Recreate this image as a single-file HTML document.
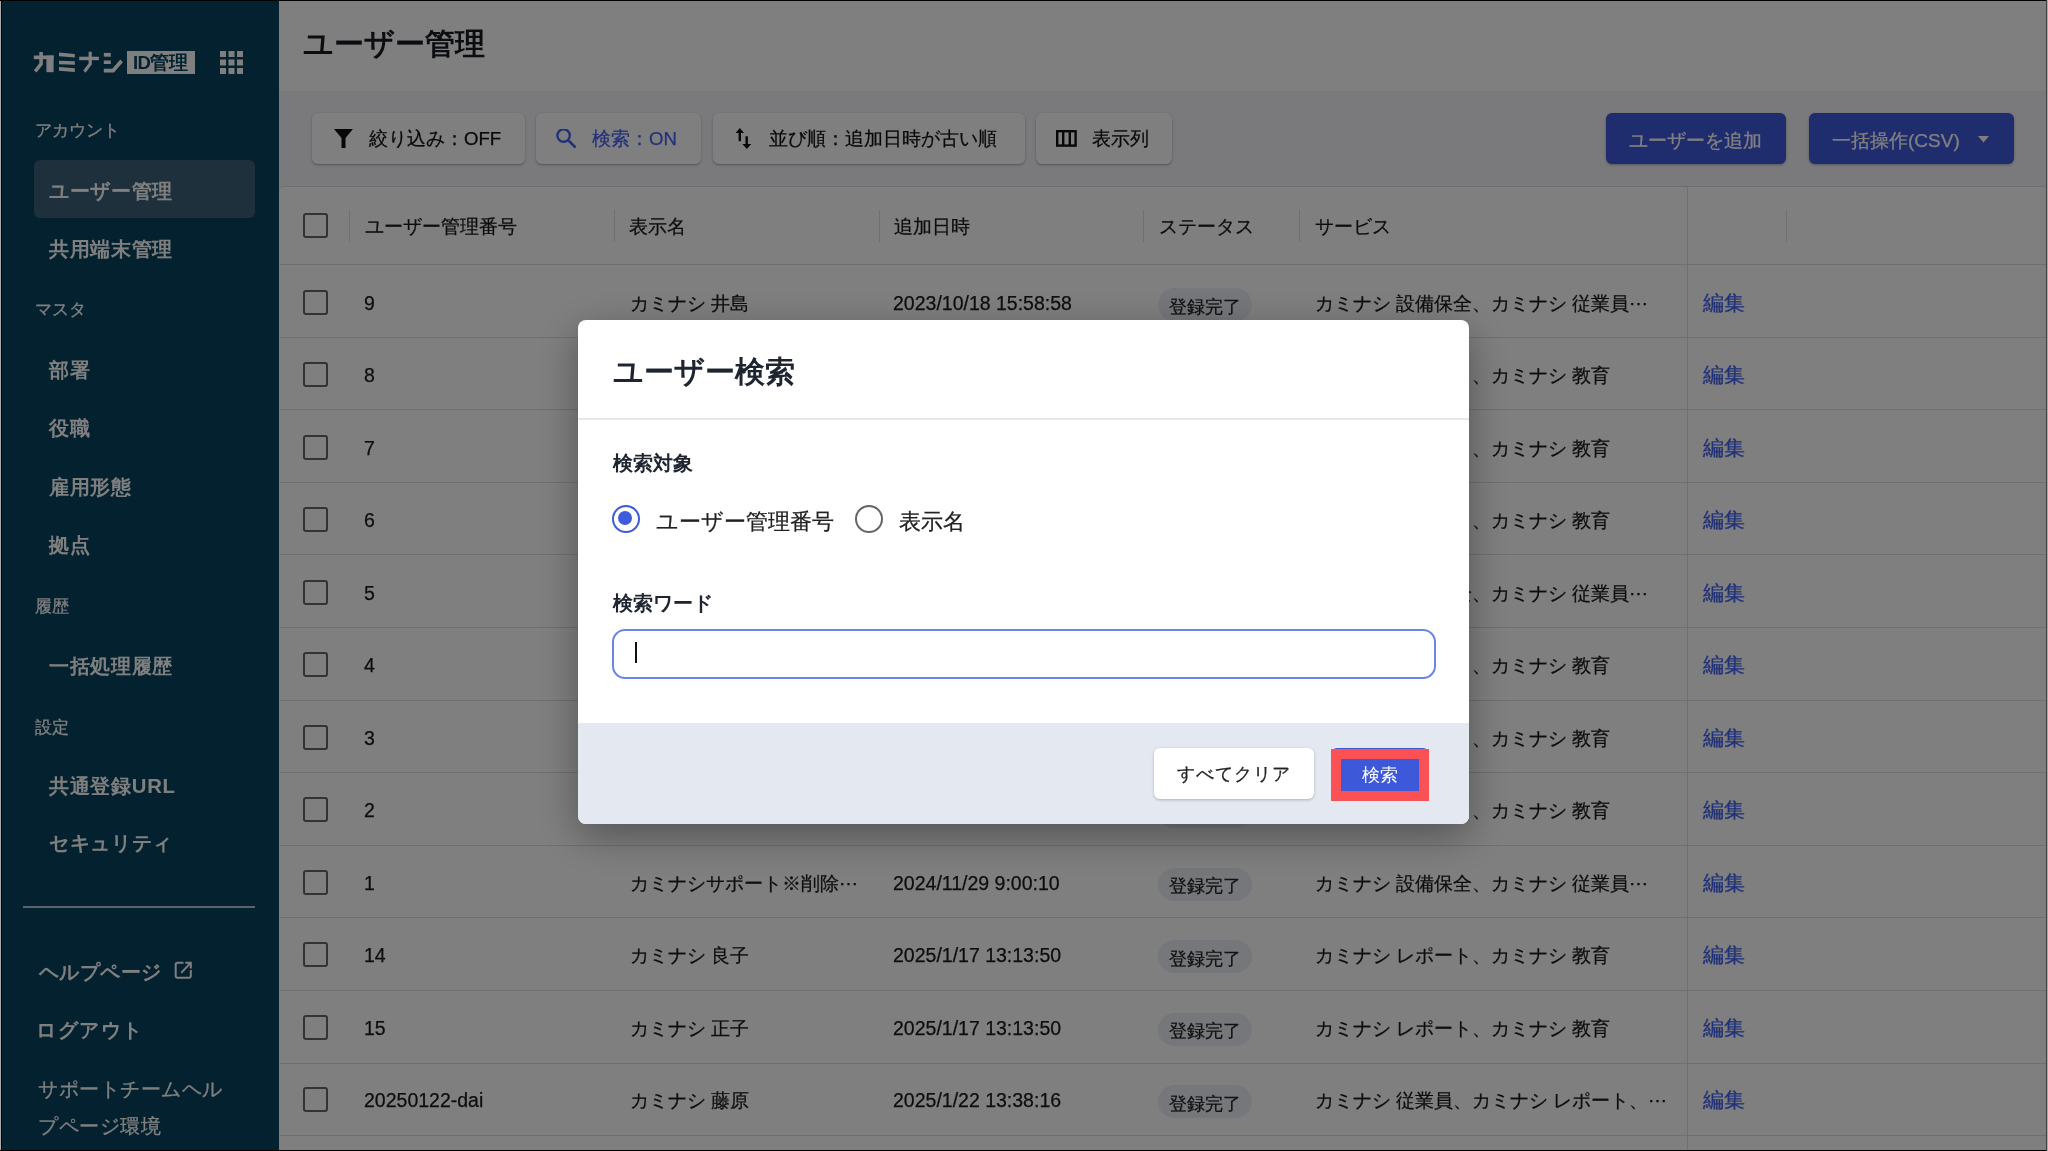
<!DOCTYPE html>
<html lang="ja"><head><meta charset="utf-8"><title>ユーザー管理</title>
<style>
*{box-sizing:border-box;margin:0;padding:0}
html,body{width:2048px;height:1151px;overflow:hidden;background:#fff}
body{position:relative;font-family:"Liberation Sans",sans-serif;color:#1a1a1a;-webkit-font-smoothing:antialiased}
.abs{position:absolute}
.row .c,.hdr,.tb .tx,.pb .tx,#modal .rlab,#modal .clr,.row .chip,#side .sec,#side .sup{-webkit-text-stroke:0.25px currentColor}
#root{position:absolute;left:0;top:0;width:2048px;height:1151px;will-change:transform}
/* sidebar */
#side{position:absolute;left:1px;top:0;width:278px;height:1151px;background:#08425e}
#side .sec{position:absolute;left:34px;font-size:16.5px;color:#fff;line-height:1}
#side .it{position:absolute;left:48px;font-size:20.3px;letter-spacing:0.7px;font-weight:bold;color:#fff;line-height:1}
#side .it2{position:absolute;left:38px;font-size:20.3px;letter-spacing:0.4px;font-weight:bold;color:#fff;line-height:1}
#side .active{position:absolute;left:33px;top:160px;width:221px;height:58px;border-radius:6px;background:#3c6078}
#side .hr{position:absolute;left:22px;top:906px;width:232px;height:2px;background:rgba(255,255,255,0.7)}
#side .sup{position:absolute;left:37px;top:1071px;font-size:20px;color:#fff;line-height:36.5px;width:200px;letter-spacing:0.5px}
/* main */
#head{position:absolute;left:279px;top:0;width:1769px;height:91px;background:#fff}
#title{position:absolute;left:303px;top:25.5px;font-size:29.8px;font-weight:bold;color:#161b22;line-height:1.2}
#tool{position:absolute;left:279px;top:91px;width:1769px;height:97px;background:#f4f5fa}
.tb{position:absolute;top:113px;height:51px;background:#fff;border-radius:6px;box-shadow:0 1px 3px rgba(0,0,0,0.25),0 1px 1px rgba(0,0,0,0.1);font-size:18.6px;color:#111;line-height:1}
.tb .ic{position:absolute}
.tb .tx{position:absolute;top:17px;white-space:nowrap}
.pb{position:absolute;top:113px;height:51px;background:#3e58dc;border-radius:6px;box-shadow:0 1px 3px rgba(0,0,0,0.3);font-size:19px;color:#fff;line-height:1}
.pb .tx{position:absolute;top:17.5px;white-space:nowrap}
#table{position:absolute;left:279px;top:186px;width:1769px;height:970px;background:#fff;border-top-left-radius:5px;border-top-right-radius:5px;border-top:1px solid #dcdde2}
.hdr{position:absolute;top:218px;font-size:18.8px;color:#1a1a1a;line-height:1}
.vd{position:absolute;top:210px;width:1px;height:32px;background:#e0e0e0}
.hline{position:absolute;left:280px;width:1766px;height:1px;background:#e0e0e0}
.cb{position:absolute;left:303px;width:25px;height:25px;border:2.6px solid #666;border-radius:3px}
.row{position:absolute;left:0;width:2048px;height:72px}
.row .cb{top:25px}
.row .c{position:absolute;top:30px;font-size:18.8px;line-height:1;white-space:nowrap;color:#1a1a1a}
.row .num{left:364px;font-size:19.5px!important;top:29px!important}
.row .name{left:630px}
.row .date{left:893px;font-size:19.5px!important;top:29px!important}
.row .svc{left:1315px}
.row .edit{left:1703px;color:#4262f0;font-size:20.8px!important;top:28px!important}
.row .chip{position:absolute;left:1158px;top:23px;width:94px;height:33px;border-radius:16.5px;background:#eceef4;font-size:18px;line-height:1;padding-top:9.5px;padding-left:11px;color:#222}
#vcol{position:absolute;left:1687px;top:187px;width:1px;height:970px;background:#e0e0e0}
/* overlay */
#ov{position:absolute;left:0;top:0;width:2048px;height:1151px;background:rgba(0,0,0,0.5)}
/* modal */
#modal{position:absolute;left:578px;top:320px;width:891px;height:504px;background:#fff;border-radius:8px;box-shadow:0 12px 40px rgba(0,0,0,0.35);overflow:hidden}
#modal .mt{position:absolute;left:35px;top:33.5px;font-size:29.8px;font-weight:bold;color:#1e2530;line-height:1.2}
#modal .mhr{position:absolute;left:0;top:98px;width:891px;height:2px;background:#e6e8ee}
#modal .lbl{position:absolute;left:35px;font-size:19.8px;font-weight:bold;color:#1e2530;line-height:1}
#modal .rlab{position:absolute;top:191px;font-size:22px;color:#222;line-height:1}
#modal .radio{position:absolute;top:185px;width:28px;height:28px;border-radius:50%;border:2.6px solid #666}
#modal .radio.on{border-color:#3e5bdb}
#modal .radio.on:after{content:"";position:absolute;left:4.4px;top:4.4px;width:14px;height:14px;border-radius:50%;background:#3e5bdb}
#modal .inp{position:absolute;left:34px;top:309px;width:824px;height:50px;border:2px solid #6a84e8;border-radius:13px}
#modal .caret{position:absolute;left:57px;top:322px;width:2px;height:21px;background:#111}
#modal .foot{position:absolute;left:0;top:403px;width:891px;height:101px;background:#e4e8f1}
#modal .clr{position:absolute;left:576px;top:428px;width:160px;height:51px;background:#fff;border-radius:6px;box-shadow:0 1px 3px rgba(0,0,0,0.25);font-size:18.4px;color:#222;line-height:1;padding-top:17px;text-align:center;letter-spacing:0.9px}
#modal .sbtn{position:absolute;left:753px;top:428px;width:98px;height:51px;background:#3d58d8;border-radius:6px}
#modal .srch{position:absolute;left:753px;top:429px;width:98px;height:52px;background:#fa5254}
#modal .srch .in{position:absolute;left:10px;top:10px;width:78px;height:32px;background:#3d58d8;color:#fff;font-size:18.3px;line-height:1;padding-top:7.3px;text-align:center}
/* frame */
#fl{position:absolute;left:0;top:0;width:1px;height:1151px;background:#aaa}
#fl2{position:absolute;left:1px;top:0;width:1px;height:1151px;background:#000}
#ft{position:absolute;left:0;top:0;width:2048px;height:1px;background:#000}
#fb{position:absolute;left:0;top:1150px;width:2048px;height:1px;background:#000}
#fr{position:absolute;left:2047px;top:0;width:1px;height:1151px;background:#aaa}
#fr2{position:absolute;left:2046px;top:0;width:1px;height:1151px;background:#404040}

</style></head><body>
<div id="root">
<div id="head"></div>
<div id="title">ユーザー管理</div>
<div id="tool"></div>
<div class="tb" style="left:312px;width:213px">
  <svg class="ic" style="left:22px;top:16px" width="19" height="19" viewBox="0 0 19 19"><path d="M0 0H19L11.5 9V19H7.5V9Z" fill="#111"/></svg>
  <div class="tx" style="left:57px">絞り込み：OFF</div>
</div>
<div class="tb" style="left:536px;width:165px">
  <svg class="ic" style="left:20px;top:16px" width="21" height="21" viewBox="0 0 21 21"><circle cx="7.6" cy="6.6" r="6.2" fill="none" stroke="#4563f2" stroke-width="2.4"/><path d="M12.4 11.4L18.8 17.8" stroke="#4563f2" stroke-width="2.7" stroke-linecap="round"/></svg>
  <div class="tx" style="left:56px;color:#4563f2">検索：ON</div>
</div>
<div class="tb" style="left:713px;width:312px">
  <svg class="ic" style="left:22px;top:15px" width="18" height="22" viewBox="0 0 18 22"><path d="M4.8 0L9 5H6V13.2H3.6V5H0.6Z M12.9 8.2V16.1H16.2L11.9 21L7.4 16.1H10.5V8.2Z" fill="#111"/></svg>
  <div class="tx" style="left:56px">並び順：追加日時が古い順</div>
</div>
<div class="tb" style="left:1036px;width:136px">
  <svg class="ic" style="left:20px;top:17px" width="21" height="17" viewBox="0 0 21 17"><rect x="1.2" y="1.2" width="18.4" height="14.4" fill="none" stroke="#111" stroke-width="2.4"/><path d="M7.2 1V16M13.8 1V16" stroke="#111" stroke-width="2.4"/></svg>
  <div class="tx" style="left:56px">表示列</div>
</div>
<div class="pb" style="left:1606px;width:180px"><div class="tx" style="left:23px">ユーザーを追加</div></div>
<div class="pb" style="left:1809px;width:205px"><div class="tx" style="left:23px">一括操作(CSV)</div>
  <svg style="position:absolute;left:169px;top:23px" width="11" height="7" viewBox="0 0 11 7"><path d="M0 0H11L5.5 6.5Z" fill="#fff"/></svg>
</div>

<div id="table"></div>
<div class="cb" style="top:213px"></div>
<div class="vd" style="left:349px"></div>
<div class="hdr" style="left:365px">ユーザー管理番号</div>
<div class="vd" style="left:614px"></div>
<div class="hdr" style="left:629px">表示名</div>
<div class="vd" style="left:879px"></div>
<div class="hdr" style="left:894px">追加日時</div>
<div class="vd" style="left:1143px"></div>
<div class="hdr" style="left:1159px">ステータス</div>
<div class="vd" style="left:1299px"></div>
<div class="hdr" style="left:1315px">サービス</div>
<div class="vd" style="left:1786px"></div>
<div id="vcol"></div>
<div class="hline" style="top:264px"></div>
<div class="hline" style="top:337px"></div>
<div class="hline" style="top:409px"></div>
<div class="hline" style="top:482px"></div>
<div class="hline" style="top:554px"></div>
<div class="hline" style="top:627px"></div>
<div class="hline" style="top:700px"></div>
<div class="hline" style="top:772px"></div>
<div class="hline" style="top:845px"></div>
<div class="hline" style="top:917px"></div>
<div class="hline" style="top:990px"></div>
<div class="hline" style="top:1063px"></div>
<div class="hline" style="top:1135px"></div>
<div class="row" style="top:265.00px"><div class="cb"></div><div class="c num">9</div><div class="c name">カミナシ 井島</div><div class="c date">2023/10/18 15:58:58</div><div class="chip">登録完了</div><div class="c svc">カミナシ 設備保全、カミナシ 従業員⋯</div><div class="c edit">編集</div></div>
<div class="row" style="top:337.47px"><div class="cb"></div><div class="c num">8</div><div class="c name">カミナシ 太郎</div><div class="c date">2023/10/18 15:58:58</div><div class="chip">登録完了</div><div class="c svc">カミナシ レポート、カミナシ 教育</div><div class="c edit">編集</div></div>
<div class="row" style="top:409.94px"><div class="cb"></div><div class="c num">7</div><div class="c name">カミナシ 次郎</div><div class="c date">2023/10/18 15:58:58</div><div class="chip">登録完了</div><div class="c svc">カミナシ レポート、カミナシ 教育</div><div class="c edit">編集</div></div>
<div class="row" style="top:482.41px"><div class="cb"></div><div class="c num">6</div><div class="c name">カミナシ 三郎</div><div class="c date">2023/10/18 15:58:58</div><div class="chip">登録完了</div><div class="c svc">カミナシ レポート、カミナシ 教育</div><div class="c edit">編集</div></div>
<div class="row" style="top:554.88px"><div class="cb"></div><div class="c num">5</div><div class="c name">カミナシ 四郎</div><div class="c date">2023/10/18 15:58:58</div><div class="chip">登録完了</div><div class="c svc">カミナシ 設備保全、カミナシ 従業員⋯</div><div class="c edit">編集</div></div>
<div class="row" style="top:627.35px"><div class="cb"></div><div class="c num">4</div><div class="c name">カミナシ 五郎</div><div class="c date">2023/10/18 15:58:58</div><div class="chip">登録完了</div><div class="c svc">カミナシ レポート、カミナシ 教育</div><div class="c edit">編集</div></div>
<div class="row" style="top:699.82px"><div class="cb"></div><div class="c num">3</div><div class="c name">カミナシ 六郎</div><div class="c date">2023/10/18 15:58:58</div><div class="chip">登録完了</div><div class="c svc">カミナシ レポート、カミナシ 教育</div><div class="c edit">編集</div></div>
<div class="row" style="top:772.29px"><div class="cb"></div><div class="c num">2</div><div class="c name">カミナシ 七郎</div><div class="c date">2023/10/18 15:58:58</div><div class="chip">登録完了</div><div class="c svc">カミナシ レポート、カミナシ 教育</div><div class="c edit">編集</div></div>
<div class="row" style="top:844.76px"><div class="cb"></div><div class="c num">1</div><div class="c name">カミナシサポート※削除⋯</div><div class="c date">2024/11/29 9:00:10</div><div class="chip">登録完了</div><div class="c svc">カミナシ 設備保全、カミナシ 従業員⋯</div><div class="c edit">編集</div></div>
<div class="row" style="top:917.23px"><div class="cb"></div><div class="c num">14</div><div class="c name">カミナシ 良子</div><div class="c date">2025/1/17 13:13:50</div><div class="chip">登録完了</div><div class="c svc">カミナシ レポート、カミナシ 教育</div><div class="c edit">編集</div></div>
<div class="row" style="top:989.70px"><div class="cb"></div><div class="c num">15</div><div class="c name">カミナシ 正子</div><div class="c date">2025/1/17 13:13:50</div><div class="chip">登録完了</div><div class="c svc">カミナシ レポート、カミナシ 教育</div><div class="c edit">編集</div></div>
<div class="row" style="top:1062.17px"><div class="cb"></div><div class="c num">20250122-dai</div><div class="c name">カミナシ 藤原</div><div class="c date">2025/1/22 13:38:16</div><div class="chip">登録完了</div><div class="c svc">カミナシ 従業員、カミナシ レポート、⋯</div><div class="c edit">編集</div></div>

<div id="side">
  <svg style="position:absolute;left:29px;top:50px" width="100" height="26" viewBox="0 0 100 26"><g fill="#fff"><path d="M3.8 5.5 L23.6 5.5 L23.6 9.2 L3.8 9.2Z"/><path d="M16.4 5.5 L23.6 5.5 L23.6 22.2 L16.4 22.2Z"/><path d="M9.3 2.0 L12.9 2.0 L12.9 14.5 L6.6 22.6 L3.9 20.3 L9.3 13.3Z"/><path d="M29.0 2.5 L44.8 4.0 L44.8 7.6 L29.0 6.2Z"/><path d="M29.0 10.7 L44.8 11.3 L44.8 14.8 L29.0 14.3Z"/><path d="M29.0 17.0 L44.8 18.3 L44.8 22.0 L29.0 20.8Z"/><path d="M49.2 6.7 L68.9 6.7 L68.9 10.2 L49.2 10.2Z"/><path d="M58.6 1.7 L61.8 1.7 L61.8 14.5 L55.6 22.8 L53.2 20.5 L58.6 13.5Z"/><path d="M73.8 2.9 L80.8 2.9 L80.8 6.7 L73.8 6.7Z"/><path d="M73.8 10.5 L80.8 10.5 L80.8 14.0 L73.8 14.0Z"/><path d="M73.8 18.7 L82.2 18.7 L90.3 9.6 L92.9 12.2 L84.0 22.4 L73.8 22.4Z"/></g></svg>
  <div style="position:absolute;left:126px;top:51px;width:68px;height:23px;background:#fff"></div>
  <div style="position:absolute;left:132px;top:51px;font-size:18.5px;font-weight:bold;color:#08425e;line-height:23px;letter-spacing:-0.6px;white-space:nowrap">ID管理</div>
  <svg style="position:absolute;left:219px;top:51px" width="23" height="23" viewBox="0 0 23 23"><g fill="#fff"><rect x="0" y="0" width="6" height="6"/><rect x="8.5" y="0" width="6" height="6"/><rect x="17" y="0" width="6" height="6"/><rect x="0" y="8.5" width="6" height="6"/><rect x="8.5" y="8.5" width="6" height="6"/><rect x="17" y="8.5" width="6" height="6"/><rect x="0" y="17" width="6" height="6"/><rect x="8.5" y="17" width="6" height="6"/><rect x="17" y="17" width="6" height="6"/></g></svg>
  <div class="sec" style="top:122px">アカウント</div>
  <div class="active"></div>
  <div class="it" style="top:181px">ユーザー管理</div>
  <div class="it" style="top:239px">共用端末管理</div>
  <div class="sec" style="top:301px">マスタ</div>
  <div class="it" style="top:360px">部署</div>
  <div class="it" style="top:418px">役職</div>
  <div class="it" style="top:477px">雇用形態</div>
  <div class="it" style="top:535px">拠点</div>
  <div class="sec" style="top:598px">履歴</div>
  <div class="it" style="top:656px">一括処理履歴</div>
  <div class="sec" style="top:719px">設定</div>
  <div class="it" style="top:776px">共通登録URL</div>
  <div class="it" style="top:833px">セキュリティ</div>
  <div class="hr"></div>
  <div class="it2" style="top:962px">ヘルプページ</div>
  <svg style="position:absolute;left:173px;top:961px" width="19" height="19" viewBox="0 0 19 19"><path d="M9.5 1.7H3.4A1.7 1.7 0 0 0 1.7 3.4V15.1A1.7 1.7 0 0 0 3.4 16.8H15.1A1.7 1.7 0 0 0 16.8 15.1V9.1" fill="none" stroke="#fff" stroke-width="2"/><path d="M11.2 1.7H16.8V7.4M7.2 11.9L16.4 2.1" fill="none" stroke="#fff" stroke-width="2"/></svg>
  <div class="it2" style="top:1020px;left:35px;letter-spacing:1.6px">ログアウト</div>
  <div class="sup">サポートチームヘルプページ環境</div>
</div>

<div id="ov"></div>

<div id="modal">
  <div class="mt">ユーザー検索</div>
  <div class="mhr"></div>
  <div class="lbl" style="top:134px">検索対象</div>
  <div class="radio on" style="left:34px"></div>
  <div class="rlab" style="left:78px">ユーザー管理番号</div>
  <div class="radio" style="left:277px"></div>
  <div class="rlab" style="left:321px">表示名</div>
  <div class="lbl" style="top:273.5px">検索ワード</div>
  <div class="inp"></div>
  <div class="caret"></div>
  <div class="foot"></div>
  <div class="clr">すべてクリア</div>
  <div class="sbtn"></div><div class="srch"><div class="in">検索</div></div>
</div>

<div id="fl"></div><div id="fl2"></div><div id="ft"></div><div id="fb"></div><div id="fr2"></div><div id="fr"></div>

</div>
</body></html>
